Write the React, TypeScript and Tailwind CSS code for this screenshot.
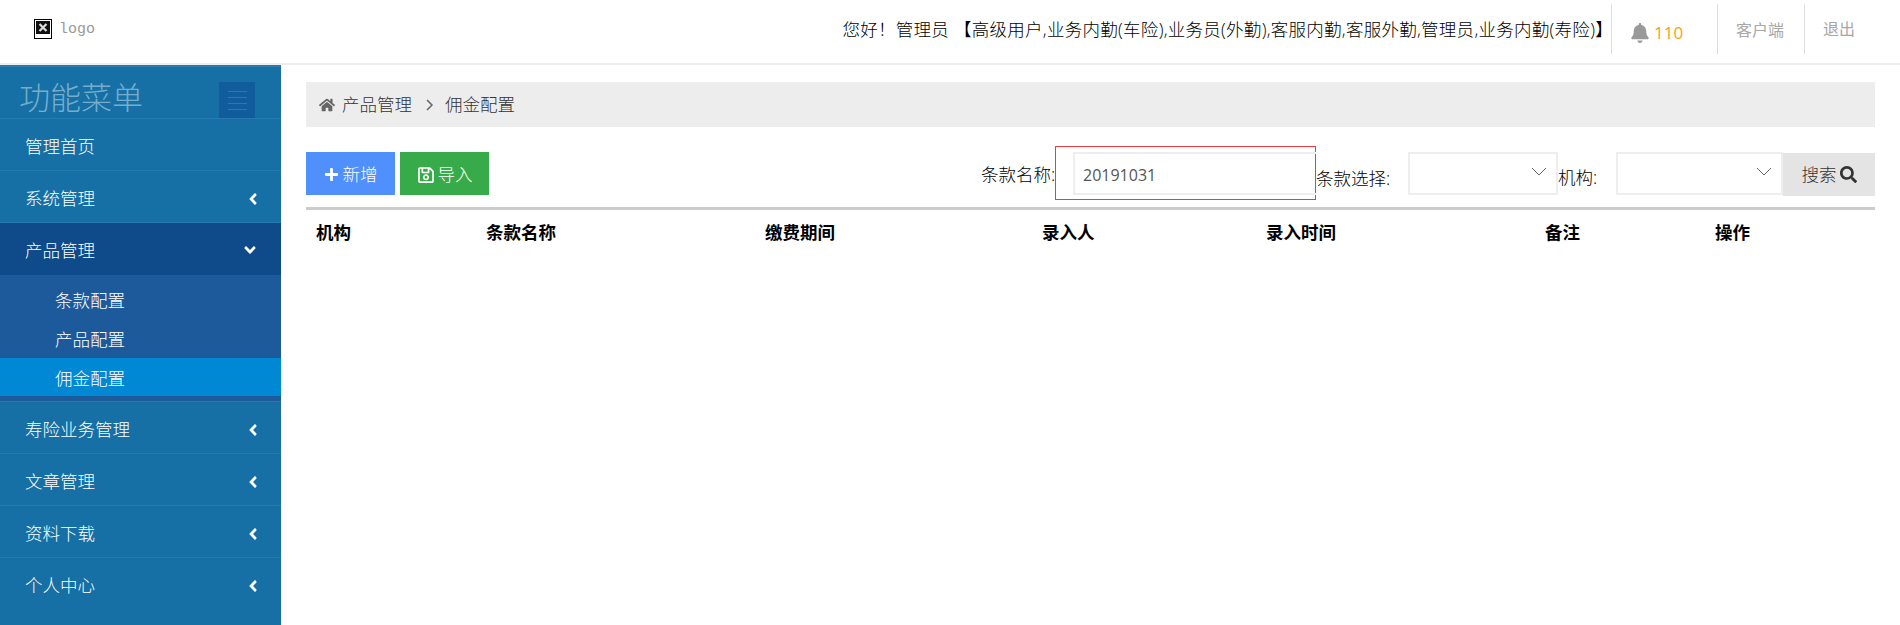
import React from 'react'
import { FaAngleDown, FaAngleLeft, FaBell, FaHome, FaPlus, FaRegSave, FaSearch } from 'react-icons/fa'

const topMenus = ['寿险业务管理', '文章管理', '资料下载', '个人中心']
const columns = [
  { name: '机构', width: 'w-[170px]' },
  { name: '条款名称', width: 'w-[279px]' },
  { name: '缴费期间', width: 'w-[277px]' },
  { name: '录入人', width: 'w-[224px]' },
  { name: '录入时间', width: 'w-[279px]' },
  { name: '备注', width: 'w-[170px]' },
  { name: '操作', width: 'w-[170px]' },
]

function Chevron() {
  return (
    <svg className="w-[16px] h-[9px] text-[#666]" viewBox="0 0 16 9" fill="none" stroke="currentColor" strokeWidth="1">
      <path d="M1 1l7 7 7-7" />
    </svg>
  )
}

function BrokenImage() {
  return (
    <svg className="w-[18px] h-[20px]" viewBox="0 0 18 20">
      <rect x="0.5" y="0.5" width="17" height="19" fill="#fff" stroke="#000" />
      <rect x="2" y="2" width="14" height="13" fill="#111" />
      <path d="M5.5 5l7 7M12.5 5l-7 7" stroke="#ddd" strokeWidth="2.2" />
    </svg>
  )
}

function MenuRow({ label, open, active }: { label: string; open?: boolean; active?: boolean }) {
  return (
    <div className={`flex items-center justify-between pl-[25px] pr-[19px] text-white border-t border-[#2779b3] ${active ? 'h-[53px] pt-[2px] bg-[#0f4a8a]' : 'h-[52px] pt-[4px]'}`}>
      <span>{label}</span>
      {open === undefined ? null : open ? <FaAngleDown className="text-[18px] mr-[3px]" /> : <FaAngleLeft className="text-[18px]" />}
    </div>
  )
}

export default function App() {
  return (
    <div className="h-screen flex flex-col bg-white text-[17.5px] font-light text-black font-['Open_Sans','Noto_Sans_CJK_SC',sans-serif] overflow-hidden">
      <header className="h-[65px] shrink-0 flex items-start border-b-2 border-[#eeeeee]">
        <div className="flex items-center gap-[7px] pl-[34px] h-[58px]">
          <BrokenImage />
          <span className="font-['Liberation_Mono',monospace] font-normal text-[15px] text-[#999] pt-[2px]">logo</span>
        </div>
        <div className="ml-auto flex items-start pt-[4px] pr-[45px]">
          <div className="h-[50px] flex items-center -mr-[2px] whitespace-nowrap tracking-[0.28px]">您好！管理员 【高级用户,业务内勤(车险),业务员(外勤),客服内勤,客服外勤,管理员,业务内勤(寿险)】</div>
          <div className="h-[50px] w-[106px] flex items-center border-l border-[#dddddd] pl-[18px] pt-[8px]">
            <FaBell className="text-[#999] text-[20px]" />
            <span className="ml-[4px] text-[#ff9d13] font-normal text-[17px]">110</span>
          </div>
          <div className="h-[50px] flex items-center border-l border-[#dddddd] pl-[18px] pr-[20px] pt-[2px] text-[16px] font-normal text-[#a8a8a8]">客户端</div>
          <div className="h-[50px] flex items-center border-l border-[#dddddd] pl-[18px] text-[16px] font-normal text-[#a8a8a8]">退出</div>
        </div>
      </header>

      <div className="flex-1 flex min-h-0">
        <aside className="w-[281px] shrink-0 bg-[#1670a5]">
          <div className="h-[53px] flex items-start justify-between pl-[19px] pr-[26px] pt-[10px] border-t-2 border-[#2a7cb0]">
            <span className="text-[31px] leading-[40px] text-[#75aecd]">功能菜单</span>
            <div className="w-[36px] h-[36px] mt-[5px] bg-[#105c9c] flex flex-col items-center justify-center gap-[5px]">
              <div className="w-[19px] h-px bg-[#2a76b6]" />
              <div className="w-[19px] h-px bg-[#2a76b6]" />
              <div className="w-[19px] h-px bg-[#2a76b6]" />
              <div className="w-[19px] h-px bg-[#2a76b6]" />
            </div>
          </div>
          <MenuRow label="管理首页" />
          <MenuRow label="系统管理" open={false} />
          <MenuRow label="产品管理" open active />
          <div className="bg-[#1c5a9c] h-[126px] pt-[5px] text-white">
            <div className="h-[39px] flex items-center pl-[55px] pt-[2px]">条款配置</div>
            <div className="h-[39px] flex items-center pl-[55px] pt-[2px]">产品配置</div>
            <div className="h-[38px] flex items-center pl-[55px] pt-[2px] bg-[#0088d4]">佣金配置</div>
          </div>
          {topMenus.map((m) => (
            <MenuRow key={m} label={m} open={false} />
          ))}
        </aside>

        <main className="flex-1 pl-[25px] pr-[25px] pt-[17px] text-[#333]">
          <div className="h-[45px] bg-[#ededed] flex items-center pl-[13px]">
            <FaHome className="text-[#666] text-[16px]" />
            <span className="ml-[7px]">产品管理</span>
            <span className="ml-[14px] mr-[11px] text-[#666]">
              <svg className="w-[8px] h-[12px]" viewBox="0 0 8 12" fill="none" stroke="currentColor" strokeWidth="1.5">
                <path d="M1 1l5 5-5 5" />
              </svg>
            </span>
            <span>佣金配置</span>
          </div>

          <div className="mt-[19px] flex items-start justify-between">
            <div className="flex gap-[5px] mt-[6px] text-white">
              <button className="w-[89px] h-[43px] pt-[2px] bg-[#4f90fd] flex items-center justify-center gap-[4px]">
                <FaPlus className="text-[15px]" />
                新增
              </button>
              <button className="w-[89px] h-[43px] pt-[2px] bg-[#37ab49] flex items-center justify-center gap-[3px]">
                <FaRegSave className="text-[18px]" />
                导入
              </button>
            </div>

            <div className="flex items-start text-black">
              <label className="mt-[15px] w-[74px] whitespace-nowrap">条款名称:</label>
              <div className="w-[261px] h-[54px] border border-[#f03a40] pt-[5px] pl-[17px]">
                <input
                  readOnly
                  value="20191031"
                  className="w-[243px] h-[43px] border-2 border-r-0 border-[#eeeeee] pl-[8px] pt-[2px] text-[16px] font-normal text-[#555] outline-none"
                />
              </div>
              <label className="mt-[19px] w-[92px] whitespace-nowrap">条款选择:</label>
              <div className="mt-[6px] w-[150px] h-[43px] border-2 border-[#eeeeee] flex items-center justify-end pr-[9px] pb-[5px]">
                <Chevron />
              </div>
              <label className="mt-[18px] w-[58px] whitespace-nowrap">机构:</label>
              <div className="mt-[6px] w-[167px] h-[43px] border-2 border-[#eeeeee] flex items-center justify-end pr-[9px] pb-[5px]">
                <Chevron />
              </div>
              <button className="mt-[7px] w-[92px] h-[43px] bg-[#e4e4e4] text-[#333] flex items-center justify-center gap-[3px]">
                搜索
                <FaSearch className="text-[17px]" />
              </button>
            </div>
          </div>

          <table className="mt-[7px] w-full table-fixed border-t-[3px] border-[#cccccc] text-black">
            <thead>
              <tr>
                {columns.map((c) => (
                  <th key={c.name} className={`${c.width} h-[46px] px-[10px] text-left font-bold`}>
                    {c.name}
                  </th>
                ))}
              </tr>
            </thead>
          </table>
        </main>
      </div>
    </div>
  )
}
